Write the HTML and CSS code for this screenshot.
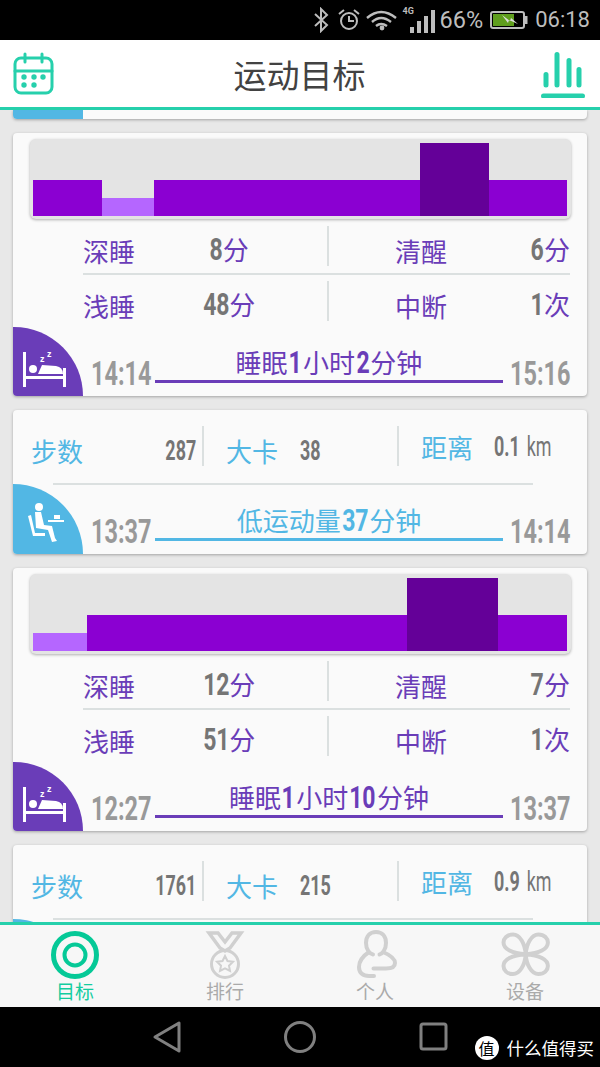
FILE: index.html
```html
<!DOCTYPE html>
<html lang="zh">
<head>
<meta charset="utf-8">
<title>运动目标</title>
<link rel="stylesheet" href="styles.css">
</head>
<body>
<div class="status">
  <svg class="st-icon bt" width="16" height="26" viewBox="0 0 16 26"><path d="M2 7l12 11-6 6V2l6 6L2 19" fill="none" stroke="#bdbdbd" stroke-width="2"/></svg>
  <svg class="st-icon" width="22" height="24" viewBox="0 0 22 24"><circle cx="11" cy="13" r="8" fill="none" stroke="#bdbdbd" stroke-width="2"/><path d="M11 8v5h5M1 6l5-4M21 6l-5-4" fill="none" stroke="#bdbdbd" stroke-width="2"/></svg>
  <svg class="st-icon" width="31" height="22" viewBox="0 0 31 22"><path d="M1 9Q15-3 30 9M6 13q9-8 19 0M10 17q5-4 11 0" fill="none" stroke="#bdbdbd" stroke-width="2.4"/><circle cx="16" cy="19" r="2.4" fill="#bdbdbd"/></svg>
  <div class="signal"><span class="tiny">4G</span><i class="s1"></i><i class="s2"></i><i class="s3"></i><i class="s4"></i></div>
  <span class="st-text pct">66%</span>
  <svg class="st-icon batt" width="38" height="20" viewBox="0 0 38 20"><rect x="1" y="2" width="33" height="16" rx="2" fill="none" stroke="#bdbdbd" stroke-width="2"/><rect x="3" y="4" width="21" height="12" fill="#5f9e1d"/><rect x="35" y="6" width="2.500" height="8" fill="#bdbdbd"/><path d="M12 5l8 6 1-3 7 6-9-4-1 3z" fill="#ddd"/></svg>
  <span class="st-text clock">06:18</span>
</div>
<header class="top">
  <svg width="42" height="44" viewBox="0 0 42 44"><rect x="2" y="6" width="37" height="35" rx="6" fill="none" stroke="#26d0ac" stroke-width="3"/><path d="M2 19h37M12 2v8M29 2v8" fill="none" stroke="#26d0ac" stroke-width="3" stroke-linecap="round"/><g fill="#26d0ac"><circle cx="11" cy="25" r="2.700"/><circle cx="21" cy="25" r="2.700"/><circle cx="30" cy="25" r="2.700"/><circle cx="11" cy="33" r="2.700"/><circle cx="21" cy="33" r="2.700"/></g></svg>
  <h1 class="title">运动目标</h1>
  <svg width="44" height="48" viewBox="0 0 44 48"><path d="M5 24.500V35M16 4.500V35M28 10.500V35M38 19.500V35M2.500 46H41.500" fill="none" stroke="#26d0ac" stroke-width="5" stroke-linecap="round"/></svg>
</header>
<main class="main">
  <section class="card stub"><div class="stub-blue"></div></section>

  <section class="card sleep">
    <div class="chart">
      <i class="bar mid" style="width:69px"></i><i class="bar light" style="width:52px"></i><i class="bar mid" style="width:266px"></i><i class="bar dark" style="width:69px"></i><i class="bar mid" style="width:78px"></i>
    </div>
    <div class="stats">
      <div class="row">
        <div class="cell"><span class="lab">深睡</span><span class="val"><b class="d1">8</b>分</span></div>
        <div class="cell right"><span class="lab">清醒</span><span class="val end"><b class="d1">6</b>分</span></div>
      </div>
      <div class="row">
        <div class="cell"><span class="lab">浅睡</span><span class="val"><b class="d2">48</b>分</span></div>
        <div class="cell right"><span class="lab">中断</span><span class="val end"><b class="d1">1</b>次</span></div>
      </div>
    </div>
    <div class="badge purple">
      <svg width="46" height="38" viewBox="0 0 46 38"><g fill="#fff"><rect x="0" y="2" width="3" height="35"/><rect x="40" y="18" width="3" height="19"/><rect x="3" y="26" width="37" height="3"/><circle cx="10" cy="19" r="4"/><path d="M15 24l4-9 14 1q7 1 7 8z"/></g><text x="17" y="12" class="zz">z</text><text x="24" y="7" class="zz">z</text></svg>
    </div>
    <div class="sum sum-purple">
      <span class="time">14:14</span>
      <div class="span-line">睡眠<b class="d1">1</b>小时<b class="d1">2</b>分钟</div>
      <span class="time">15:16</span>
    </div>
  </section>

  <section class="card steps">
    <div class="steps-row">
      <div class="s-cell c1"><span class="s-lab">步数</span><b class="s-num">287</b></div>
      <div class="s-cell c2"><span class="s-lab">大卡</span><b class="s-num">38</b></div>
      <div class="s-cell c3"><span class="s-lab">距离</span><b class="s-num">0.1 <em>km</em></b></div>
    </div>
    <div class="rule"></div>
    <div class="badge blue">
      <svg width="38" height="44" viewBox="0 0 38 44"><g fill="#fff"><circle cx="13" cy="5" r="4"/><path d="M9 10l6 0 3 13 8 1 3 12 2 3-5 1-4-12-12-2z"/><path d="M2 14l3-1 4 18h10v3H7z"/><rect x="22" y="18" width="16" height="2"/><rect x="28" y="13" width="6" height="4"/></g></svg>
    </div>
    <div class="sum sum-blue">
      <span class="time">13:37</span>
      <div class="span-line">低运动量<b class="d2">37</b>分钟</div>
      <span class="time">14:14</span>
    </div>
  </section>

  <section class="card sleep">
    <div class="chart">
      <i class="bar light" style="width:54px"></i><i class="bar mid" style="width:320px"></i><i class="bar dark" style="width:91px"></i><i class="bar mid" style="width:69px"></i>
    </div>
    <div class="stats">
      <div class="row">
        <div class="cell"><span class="lab">深睡</span><span class="val"><b class="d2">12</b>分</span></div>
        <div class="cell right"><span class="lab">清醒</span><span class="val end"><b class="d1">7</b>分</span></div>
      </div>
      <div class="row">
        <div class="cell"><span class="lab">浅睡</span><span class="val"><b class="d2">51</b>分</span></div>
        <div class="cell right"><span class="lab">中断</span><span class="val end"><b class="d1">1</b>次</span></div>
      </div>
    </div>
    <div class="badge purple">
      <svg width="46" height="38" viewBox="0 0 46 38"><g fill="#fff"><rect x="0" y="2" width="3" height="35"/><rect x="40" y="18" width="3" height="19"/><rect x="3" y="26" width="37" height="3"/><circle cx="10" cy="19" r="4"/><path d="M15 24l4-9 14 1q7 1 7 8z"/></g><text x="17" y="12" class="zz">z</text><text x="24" y="7" class="zz">z</text></svg>
    </div>
    <div class="sum sum-purple">
      <span class="time">12:27</span>
      <div class="span-line">睡眠<b class="d1">1</b>小时<b class="d2">10</b>分钟</div>
      <span class="time">13:37</span>
    </div>
  </section>

  <section class="card steps">
    <div class="steps-row">
      <div class="s-cell c1"><span class="s-lab">步数</span><b class="s-num">1761</b></div>
      <div class="s-cell c2"><span class="s-lab">大卡</span><b class="s-num">215</b></div>
      <div class="s-cell c3"><span class="s-lab">距离</span><b class="s-num">0.9 <em>km</em></b></div>
    </div>
    <div class="rule"></div>
    <div class="badge blue"></div>
  </section>
</main>
<nav class="tabs">
  <div class="tab on">
    <svg width="50" height="50" viewBox="0 0 50 50"><circle cx="25" cy="25" r="21.500" fill="none" stroke="#05c997" stroke-width="5"/><circle cx="25" cy="25" r="10.500" fill="none" stroke="#05c997" stroke-width="4"/></svg>
    <span>目标</span>
  </div>
  <div class="tab">
    <svg width="50" height="50" viewBox="0 0 50 50"><path d="M9 3h9l7 9 7-9h9l-11 15-5 3-5-3z" fill="none" stroke="#d0d0d0" stroke-width="3.500"/><circle cx="25" cy="34" r="13.500" fill="none" stroke="#d0d0d0" stroke-width="3"/><path d="M25 26l2.500 5 5.500.8-4 3.900 1 5.300-5-2.600-5 2.600 1-5.300-4-3.900 5.500-.8z" fill="none" stroke="#d0d0d0" stroke-width="2"/></svg>
    <span>排行</span>
  </div>
  <div class="tab">
    <svg width="50" height="50" viewBox="0 0 50 50"><path d="M23 24.500C20 24 16 20 16 13 16 6 20 2 26 2s10 4 10 11c0 7-4 11-6.500 11.500M33 22c7 3 12 7 12 11 0 4-4 5.500-9 5.500H23.500M19 22C13 26 9 31 9 37c0 6 4 9 10 9h5" fill="none" stroke="#d0d0d0" stroke-width="4" stroke-linecap="round"/></svg>
    <span>个人</span>
  </div>
  <div class="tab">
    <svg width="50" height="50" viewBox="0 0 50 50"><path d="M25.700 24.300C25 14 20 4.500 13 4.500 7 4.500 3.500 8.500 3.500 12.500 3.500 19 12 23.500 25.700 24.300ZM25.700 24.300C26.400 14 31.400 4.500 38.400 4.500 44.400 4.500 47.900 8.500 47.900 12.500 47.900 19 39.400 23.500 25.700 24.300ZM25.700 24.300C25 34.600 20 44.100 13 44.100 7 44.100 3.500 40.100 3.500 36.100 3.500 29.600 12 25.100 25.700 24.300ZM25.700 24.300C26.400 34.600 31.400 44.100 38.400 44.100 44.400 44.100 47.900 40.100 47.900 36.100 47.900 29.600 39.400 25.100 25.700 24.300Z" fill="none" stroke="#d0d0d0" stroke-width="4"/></svg>
    <span>设备</span>
  </div>
</nav>
<footer class="sysnav">
  <svg class="nav-back" width="30" height="34" viewBox="0 0 30 34"><path d="M27 3v28L3 17z" fill="none" stroke="#808080" stroke-width="3" stroke-linejoin="round"/></svg>
  <svg class="nav-home" width="32" height="32" viewBox="0 0 32 32"><circle cx="16" cy="16" r="14.500" fill="none" stroke="#808080" stroke-width="3"/></svg>
  <svg width="30" height="30" viewBox="0 0 30 30"><rect x="2" y="2" width="25" height="25" rx="2" fill="none" stroke="#808080" stroke-width="3"/></svg>
  <div class="mark"><span class="mark-dot">值</span><span>什么值得买</span></div>
</footer>
</body>
</html>
```

FILE: styles.css
```css
* { box-sizing: border-box; }
html, body { margin: 0; padding: 0; }
body {
  width: 600px;
  height: 1067px;
  overflow: hidden;
  display: flex;
  flex-direction: column;
  font-family: "Noto Sans CJK SC", "Noto Sans", sans-serif;
  background: #e8e8e8;
}
b {
  font-family: "Roboto", sans-serif;
  font-weight: 700;
  display: inline-block;
  transform: scaleX(.72);
}
.d1 { margin: 0 -2.500px; }
.d2 { margin: 0 -5px; }

.status {
  height: 40px;
  flex: none;
  background: #000;
  display: flex;
  align-items: center;
  justify-content: flex-end;
  padding-right: 10px;
  color: #bdbdbd;
}
.st-icon { display: block; margin-right: 6px; }
.bt { margin-right: 9px; }
.batt { margin-right: 7px; }
.st-text { font: 400 23.500px/40px "Roboto", sans-serif; }
.clock { font-size: 22px; }
.pct { margin-right: 7px; }
.signal { position: relative; width: 32px; height: 26px; display: flex; align-items: flex-end; gap: 3px; padding-left: 7px; margin-right: 5px; }
.signal i { display: block; width: 4px; background: #bdbdbd; }
.s1 { height: 6px; } .s2 { height: 12px; } .s3 { height: 17px; } .s4 { height: 23px; }
.tiny { position: absolute; left: 0; top: -1px; font: 700 9px/11px "Roboto", sans-serif; }

.top {
  height: 70px;
  flex: none;
  background: #fff;
  border-bottom: 3px solid #26d0ac;
  display: flex;
  align-items: center;
  justify-content: space-between;
  padding: 0 15px 0 13px;
}
.title { margin: 0 0 0 3px; font-size: 33px; line-height: 48px; font-weight: 400; color: #424242; }

.main {
  flex: 1;
  min-height: 0;
  overflow: hidden;
  padding: 0 13px;
  display: flex;
  flex-direction: column;
  gap: 14px;
}
.card {
  flex: none;
  position: relative;
  background: #fafafa;
  border-radius: 4px;
  box-shadow: 0 1px 3px rgba(0, 0, 0, .3);
}
.stub { height: 9px; border-radius: 0 0 4px 4px; overflow: hidden; }
.stub-blue { width: 70px; height: 9px; background: #52b7e4; }
.sleep { height: 263px; padding-top: 6px; display: flex; flex-direction: column; }
.steps { height: 144px; display: flex; flex-direction: column; }

.chart {
  height: 80px;
  margin: 0 16px 0 17px;
  background: #e4e4e4;
  border-radius: 6px;
  box-shadow: 0 1px 3px rgba(0, 0, 0, .3);
  display: flex;
  align-items: flex-end;
  padding: 0 4px 3px 3px;
}
.bar { display: block; flex: none; }
.mid { height: 36px; background: #8b00d2; }
.light { height: 18px; background: #b566ff; }
.dark { height: 73px; background: #640098; }

.stats { margin: 7px 17px 0 70px; }
.row { display: flex; }
.row:first-child { height: 49px; border-bottom: 2px solid #dbe0e0; }
.row:last-child { padding-top: 6px; height: 46px; }
.cell { display: flex; align-items: flex-start; height: 40px; }
.cell:first-child { width: 244px; }
.right { flex: 1; border-left: 2px solid #dbe0e0; padding-left: 66px; justify-content: space-between; }
.lab { font-size: 26px; line-height: 40px; color: #6a3db8; padding-top: 5px; }
.val { font-size: 26px; line-height: 40px; color: #6a3db8; width: 100px; margin-left: 44px; padding-top: 3px; text-align: center; white-space: nowrap; }
.val.end { width: auto; margin-left: 0; text-align: right; }
.val b { font-size: 32px; color: #757575; }

.badge {
  position: absolute;
  left: 0;
  bottom: 0;
  width: 70px;
  height: 69px;
  border-radius: 0 70px 0 4px;
  display: flex;
  align-items: flex-end;
  padding: 0 0 8px 10px;
}
.purple { background: #6a3db8; }
.blue { background: #52b7e4; padding-left: 13px; height: 70px; }
.zz { font: 700 9px "Liberation Sans", sans-serif; fill: #fff; }

.sum {
  margin: auto 17px 5px 78px;
  display: flex;
  align-items: flex-end;
}
.time {
  font: 700 34px/36px "Roboto", sans-serif;
  color: #999;
  flex: none;
  width: 60px;
  white-space: nowrap;
  transform: scaleX(.69);
  transform-origin: left center;
}
.span-line {
  flex: 1;
  height: 40px;
  margin: 0 7px 8px 4px;
  border-bottom: 3px solid;
  text-align: center;
  font-size: 26px;
  line-height: 38px;
  white-space: nowrap;
}
.span-line b { font-size: 32px; }
.span-line .d1 { margin: 0 -1.500px; }
.span-line .d2 { margin: 0 -4px; }
.sum-purple .span-line { color: #6a3db8; }
.sum-blue .span-line { color: #52b7e4; }

.steps-row {
  height: 73px;
  padding-top: 16px;
  display: grid;
  grid-template-columns: 191px 195px 1fr;
  align-items: start;
}
.s-cell { height: 40px; display: flex; align-items: flex-start; white-space: nowrap; }
.c1 { border-right: 2px solid #dbe0e0; padding: 0 6px 0 18px; justify-content: space-between; }
.c2 { border-right: 2px solid #dbe0e0; padding-left: 22px; gap: 22px; }
.c3 { padding-left: 22px; gap: 21px; }
.s-lab { font-size: 26px; line-height: 40px; color: #52b7e4; padding-top: 5px; }
.s-num {
  font-size: 28px;
  line-height: 36px;
  color: #757575;
  padding-top: 7px;
  transform: scaleX(.64);
  transform-origin: left center;
}
.c1 .s-num { transform-origin: right center; }
.c3 .s-lab { padding-top: 1px; }
.c3 .s-num { padding-top: 3px; }
.s-num em { font-style: normal; font-weight: 400; margin-left: 4px; }
.rule { height: 2px; margin: 0 54px 0 40px; background: #dbe0e0; }

.tabs {
  height: 85px;
  flex: none;
  background: #f7f7f7;
  border-top: 3px solid #26d0ac;
  display: grid;
  grid-template-columns: repeat(4, 150px);
}
.tab { display: flex; flex-direction: column; align-items: center; padding-top: 5px; color: #aaa; font-size: 19px; line-height: 26px; }
.tab svg { display: block; margin-bottom: -2px; }
.tab.on { color: #13cc9f; }

.sysnav {
  height: 60px;
  flex: none;
  background: #000;
  position: relative;
  display: flex;
  align-items: center;
  padding-left: 152px;
}
.sysnav svg { display: block; }
.nav-back { margin-right: 102px; }
.nav-home { margin-right: 103px; }
.mark {
  position: absolute;
  right: 6px;
  bottom: 7px;
  display: flex;
  align-items: center;
  gap: 8px;
  color: #fff;
  font-size: 17.500px;
  line-height: 24px;
}
.mark-dot {
  width: 24px;
  height: 24px;
  border-radius: 50%;
  background: #fff;
  color: #000;
  font-size: 16px;
  line-height: 24px;
  text-align: center;
}
```
